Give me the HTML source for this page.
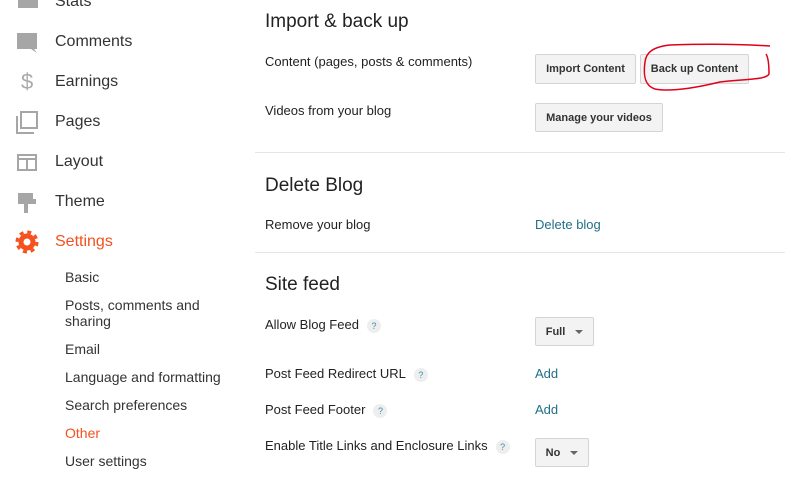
<!DOCTYPE html><html><head><style>
body{margin:0;width:785px;height:482px;overflow:hidden;background:#fff;font-family:"Liberation Sans",Arial,sans-serif;position:relative;color:#222}
.a{position:absolute;white-space:nowrap}
.nav{font-size:16px;color:#333;left:55px}
.sub{font-size:14px;color:#333;left:65px}
.h{font-size:19px;left:265px;color:#222}
.l{font-size:13px;left:265px;color:#222}
.btn{position:absolute;background:#f3f3f3;border:1px solid #d4d4d4;border-radius:2px;font-size:11px;font-weight:bold;color:#333;display:flex;align-items:center;justify-content:center;box-sizing:border-box}
.lnk{font-size:13px;color:#1f6f86;left:535px}
.q{display:inline-block;width:14px;height:14px;border-radius:7px;background:#eee;color:#3a8fb0;font-size:9px;text-align:center;line-height:14px;margin-left:8px;vertical-align:middle}
.hr{position:absolute;left:255px;right:0;height:1px;background:#e5e5e5}
.car{display:inline-block;width:0;height:0;border-left:4px solid transparent;border-right:4px solid transparent;border-top:4px solid #666;margin-left:10px}
</style></head><body>
<svg class="a" style="left:0;top:0" width="50" height="260">
<rect x="18" y="-10" width="20" height="18" fill="#a6a6a6"/>
<path d="M17 33h20v16h-3l3 4-6-4H17z" fill="#a6a6a6"/>
<text x="21" y="89" font-size="22" fill="#aaa" font-family="Liberation Sans">$</text>
<rect x="21" y="112" width="16" height="16" fill="none" stroke="#a6a6a6" stroke-width="2"/><path d="M17 116v17h17" fill="none" stroke="#a6a6a6" stroke-width="2"/>
<rect x="18" y="155" width="18" height="15" fill="none" stroke="#a6a6a6" stroke-width="2"/><path d="M18 159h18M27 159v11" stroke="#a6a6a6" stroke-width="2"/>
<path d="M18 193h15v6h3v5h-8v9h-4v-9h-6z" fill="#a6a6a6"/>
<circle cx="27" cy="242" r="6" fill="none" stroke="#f4511e" stroke-width="5"/><circle cx="27" cy="242" r="10" fill="none" stroke="#f4511e" stroke-width="3" stroke-dasharray="4 3.85"/>
</svg>
<div class="a nav" style="top:-7px">Stats</div>
<div class="a nav" style="top:33px">Comments</div>
<div class="a nav" style="top:73px">Earnings</div>
<div class="a nav" style="top:113px">Pages</div>
<div class="a nav" style="top:153px">Layout</div>
<div class="a nav" style="top:193px">Theme</div>
<div class="a nav" style="top:233px;color:#f4511e">Settings</div>
<div class="a sub" style="top:269px">Basic</div>
<div class="a sub" style="top:297px;line-height:16px">Posts, comments and<br>sharing</div>
<div class="a sub" style="top:341px">Email</div>
<div class="a sub" style="top:369px">Language and formatting</div>
<div class="a sub" style="top:397px">Search preferences</div>
<div class="a sub" style="top:425px;color:#f4511e">Other</div>
<div class="a sub" style="top:453px">User settings</div>

<div class="a h" style="top:11px">Import &amp; back up</div>
<div class="a l" style="top:54px">Content (pages, posts &amp; comments)</div>
<div class="btn" style="left:535px;top:54px;width:101px;height:30px">Import Content</div>
<div class="btn" style="left:640px;top:54px;width:109px;height:30px">Back up Content</div>
<div class="a l" style="top:103px">Videos from your blog</div>
<div class="btn" style="left:535px;top:103px;width:128px;height:29px">Manage your videos</div>
<div class="hr" style="top:152px"></div>
<div class="a h" style="top:175px">Delete Blog</div>
<div class="a l" style="top:217px">Remove your blog</div>
<div class="a lnk" style="top:217px">Delete blog</div>
<div class="hr" style="top:252px"></div>
<div class="a h" style="top:274px">Site feed</div>
<div class="a l" style="top:317px">Allow Blog Feed<span class="q">?</span></div>
<div class="btn" style="left:535px;top:317px;width:59px;height:29px">Full<span class="car"></span></div>
<div class="a l" style="top:366px">Post Feed Redirect URL<span class="q">?</span></div>
<div class="a lnk" style="top:366px">Add</div>
<div class="a l" style="top:402px">Post Feed Footer<span class="q">?</span></div>
<div class="a lnk" style="top:402px">Add</div>
<div class="a l" style="top:438px">Enable Title Links and Enclosure Links<span class="q">?</span></div>
<div class="btn" style="left:535px;top:438px;width:54px;height:29px">No<span class="car"></span></div>
<svg class="a" style="left:0;top:0" width="785" height="482"><path d="M770 46C740 44 700 44 670 45 652 47 646 53 645 62 643 76 645 86 655 89 670 92 695 88 720 82 745 79 766 80 769 74 769 62 768 57 766 54 764 52" fill="none" stroke="#e0001a" stroke-width="1.5"/></svg>
</body></html>
